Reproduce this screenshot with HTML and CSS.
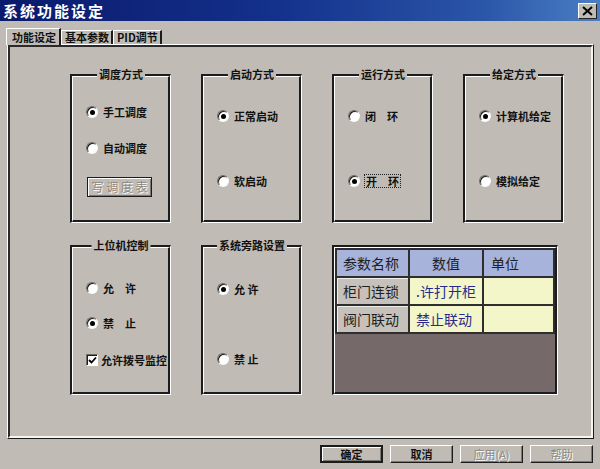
FILE: index.html
```html
<!DOCTYPE html>
<html lang="zh-CN">
<head>
    <meta charset="UTF-8">
    <title>系统功能设定</title>
    <link rel="stylesheet" href="styles.css">
</head>
<body>
<div class="window">

    <div class="titlebar">
        <span class="title">系统功能设定</span>
        <span class="close">
            <svg width="11" height="10" viewBox="0 0 11 10"><path d="M1 1 L10 9 M10 1 L1 9" stroke="#000" stroke-width="2"/></svg>
        </span>
    </div>

    <div class="tabs">
        <div class="tab active">功能设定</div>
        <div class="tab">基本参数</div>
        <div class="tab">PID调节</div>
    </div>

    <div class="panel">
        <div class="panel-in">
            <div class="grid">

                <div class="group g-mode">
                    <span class="legend">调度方式</span>
                    <div class="group-in">
                        <div class="opt"><span class="radio on"></span>手工调度</div>
                        <div class="opt"><span class="radio"></span>自动调度</div>
                        <div class="wbtn">写 调 度 表</div>
                    </div>
                </div>

                <div class="group g-wide">
                    <span class="legend">启动方式</span>
                    <div class="group-in">
                        <div class="opt"><span class="radio on"></span>正常启动</div>
                        <div class="opt"><span class="radio"></span>软启动</div>
                    </div>
                </div>

                <div class="group g-wide">
                    <span class="legend">运行方式</span>
                    <div class="group-in">
                        <div class="opt"><span class="radio"></span>闭　环</div>
                        <div class="opt"><span class="radio on"></span><span class="focus">开　环</span></div>
                    </div>
                </div>

                <div class="group g-wide">
                    <span class="legend">给定方式</span>
                    <div class="group-in">
                        <div class="opt"><span class="radio on"></span>计算机给定</div>
                        <div class="opt"><span class="radio"></span>模拟给定</div>
                    </div>
                </div>

                <div class="group g-ctrl">
                    <span class="legend">上位机控制</span>
                    <div class="group-in">
                        <div class="opt"><span class="radio"></span>允　许</div>
                        <div class="opt"><span class="radio on"></span>禁　止</div>
                        <div class="opt chk"><span class="checkbox">
                            <svg width="9" height="9" viewBox="0 0 9 9"><path d="M1 4 L3.5 6.5 L8 1.5" stroke="#000" stroke-width="1.8" fill="none"/></svg>
                        </span>允许拨号监控</div>
                    </div>
                </div>

                <div class="group g-bypass">
                    <span class="legend">系统旁路设置</span>
                    <div class="group-in">
                        <div class="opt"><span class="radio on"></span>允 许</div>
                        <div class="opt"><span class="radio"></span>禁 止</div>
                    </div>
                </div>

                <div class="table-frame">
                    <div class="table-in">
                        <table class="ptable">
                            <tr>
                                <th class="c1">参数名称</th>
                                <th class="c2">数值</th>
                                <th class="c3">单位</th>
                            </tr>
                            <tr>
                                <td class="name">柜门连锁</td>
                                <td class="val">.许打开柜</td>
                                <td class="val"></td>
                            </tr>
                            <tr>
                                <td class="name">阀门联动</td>
                                <td class="val">禁止联动</td>
                                <td class="val"></td>
                            </tr>
                        </table>
                    </div>
                </div>

            </div>
        </div>
    </div>

    <div class="buttons">
        <div class="btn default">确定</div>
        <div class="btn">取消</div>
        <div class="btn disabled">应用(A)</div>
        <div class="btn disabled">帮助</div>
    </div>

</div>
</body>
</html>
```

FILE: styles.css
```css
body {
    margin: 0;
    font-family: "Noto Sans CJK SC", "Liberation Sans", sans-serif;
    font-size: 11px;
    font-weight: bold;
    color: #111;
}
.window {
    width: 600px;
    height: 469px;
    background-color: #c0bcb5;
}
.titlebar {
    height: 21px;
    background: linear-gradient(90deg, #0a1a6c 0%, #13308a 45%, #2a55a8 80%, #4a7ec4 100%);
    display: flex;
    justify-content: space-between;
    align-items: center;
    padding: 0 3px 0 3px;
}
.title {
    color: white;
    font-size: 15px;
    font-weight: bold;
    line-height: 20px;
    padding-top: 1px;
    letter-spacing: 2px;
}
.close {
    width: 17px;
    height: 14px;
    background-color: #c0bcb5;
    border: 1px solid;
    border-color: #fff #222 #222 #fff;
    display: flex;
    justify-content: center;
    align-items: center;
}
.tabs {
    display: flex;
    align-items: flex-end;
    height: 17px;
    margin-top: 6px;
    padding-left: 8px;
}
.tab {
    height: 13px;
    line-height: 13px;
    padding: 0 2px 0 3px;
    border-top: 1px solid #fff;
    border-left: 1px solid #fff;
    border-right: 2px solid #1c1c1c;
}
.tab.active {
    height: 16px;
    line-height: 16px;
    margin-left: -2px;
    padding: 0 3px 0 5px;
    position: relative;
    z-index: 1;
    margin-bottom: -1px;
    background-color: #c0bcb5;
}
.panel {
    margin: 0 6px 0 7px;
    height: 395px;
    box-sizing: border-box;
    border: 1px solid;
    border-color: #fff #1c1c1c #1c1c1c #fff;
}
.panel-in {
    height: 100%;
    box-sizing: border-box;
    border: 2px solid;
    border-color: #2a2a2a #f4f4f0 #f4f4f0 #2a2a2a;
}
.grid {
    display: grid;
    grid-template-columns: 101px 101px 101px 101px;
    grid-template-rows: 149px 150px;
    column-gap: 30px;
    row-gap: 22px;
    padding: 27px 0 0 60px;
}
.group, .table-frame {
    position: relative;
    box-sizing: border-box;
    border-style: solid;
    border-width: 2px 1px 1px 2px;
    border-color: #1c1c1c #fff #fff #1c1c1c;
}
.group-in, .table-in {
    height: 100%;
    box-sizing: border-box;
    border-style: solid;
    border-width: 1px 2px 2px 1px;
    border-color: #fff #1c1c1c #1c1c1c #fff;
}
.group-in {
    display: flex;
    flex-direction: column;
    align-items: flex-start;
    padding-left: 13px;
}
.legend {
    position: absolute;
    top: -10px;
    left: 50%;
    transform: translateX(-50%);
    background-color: #c0bcb5;
    padding: 0 2px;
    line-height: 16px;
    white-space: nowrap;
    z-index: 1;
}
.g-mode .group-in {
    padding-top: 27px;
    gap: 20px;
}
.g-wide .group-in {
    padding-top: 31px;
    gap: 49px;
}
.g-ctrl .group-in {
    padding-top: 32px;
    gap: 19px;
}
.g-ctrl .chk {
    margin-top: 2px;
    gap: 3px;
}
.g-bypass .group-in {
    padding-top: 33px;
    gap: 54px;
}
.opt {
    display: flex;
    align-items: center;
    gap: 5px;
    height: 16px;
    line-height: 16px;
    white-space: nowrap;
}
.radio {
    width: 10px;
    height: 10px;
    border-radius: 50%;
    background-color: #fff;
    border: 1px solid;
    border-color: #6e6a64 #f8f8f8 #f8f8f8 #6e6a64;
    box-shadow: inset 1px 1px 0 #1c1c1c;
    position: relative;
}
.radio.on::after {
    content: "";
    position: absolute;
    left: 3px;
    top: 3px;
    width: 5px;
    height: 5px;
    border-radius: 50%;
    background-color: #000;
}
.checkbox {
    width: 10px;
    height: 10px;
    background-color: #fff;
    border: 1px solid;
    border-color: #6e6a64 #fff #fff #6e6a64;
    box-shadow: inset 1px 1px 0 #1c1c1c;
    display: flex;
    justify-content: center;
    align-items: center;
}
.focus {
    border: 1px dotted #222;
    line-height: 12px;
    padding: 0 1px;
    margin-left: -1px;
}
.wbtn {
    margin: 1px 0 0 1px;
    width: 65px;
    height: 20px;
    box-sizing: border-box;
    border: 1px solid #1c1c1c;
    box-shadow: inset 1px 1px 0 #fff, inset -1px -1px 0 #7c7870;
    color: #8c8882;
    text-shadow: 1px 1px 0 #fff;
    font-size: 12px;
    font-weight: normal;
    line-height: 18px;
    text-align: center;
    white-space: nowrap;
}
.table-frame {
    grid-column: 3 / span 2;
    width: 226px;
}
.table-in {
    background-color: #756a69;
}
.ptable {
    width: 100%;
    border-collapse: collapse;
    font-size: 14px;
}
.ptable th, .ptable td {
    border: 2px solid #2e2e2e;
    padding: 0 6px;
    font-weight: normal;
    white-space: nowrap;
    overflow: hidden;
}
.ptable tr {
    height: 28px;
}
.ptable th {
    background-color: #a7b3db;
    color: #1e1e1e;
    text-align: left;
}
.ptable .c1 {
    width: 59px;
}
.ptable .c2 {
    width: 59px;
    text-align: center;
}
.ptable .c3 {
    padding-left: 7px;
}
.ptable td.name {
    background-color: #c6c2bb;
    color: #1e1e1e;
    box-shadow: inset 1px 1px 0 #eeeeea;
}
.ptable td.val {
    background-color: #f2f6c8;
    color: #2a2a8c;
}
.buttons {
    display: flex;
    justify-content: flex-end;
    gap: 7px;
    margin-top: 6px;
    padding-right: 7px;
}
.btn {
    width: 63px;
    height: 18px;
    box-sizing: border-box;
    border: 1px solid;
    border-color: #fff #1c1c1c #1c1c1c #fff;
    box-shadow: inset -1px -1px 0 #7c7870;
    text-align: center;
    line-height: 16px;
}
.btn.default {
    border: 2px solid #1c1c1c;
    box-shadow: inset 1px 1px 0 #fff, inset -1px -1px 0 #7c7870;
    line-height: 14px;
}
.btn.disabled {
    color: #8c8882;
    text-shadow: 1px 1px 0 #fff;
    font-weight: normal;
}
```
